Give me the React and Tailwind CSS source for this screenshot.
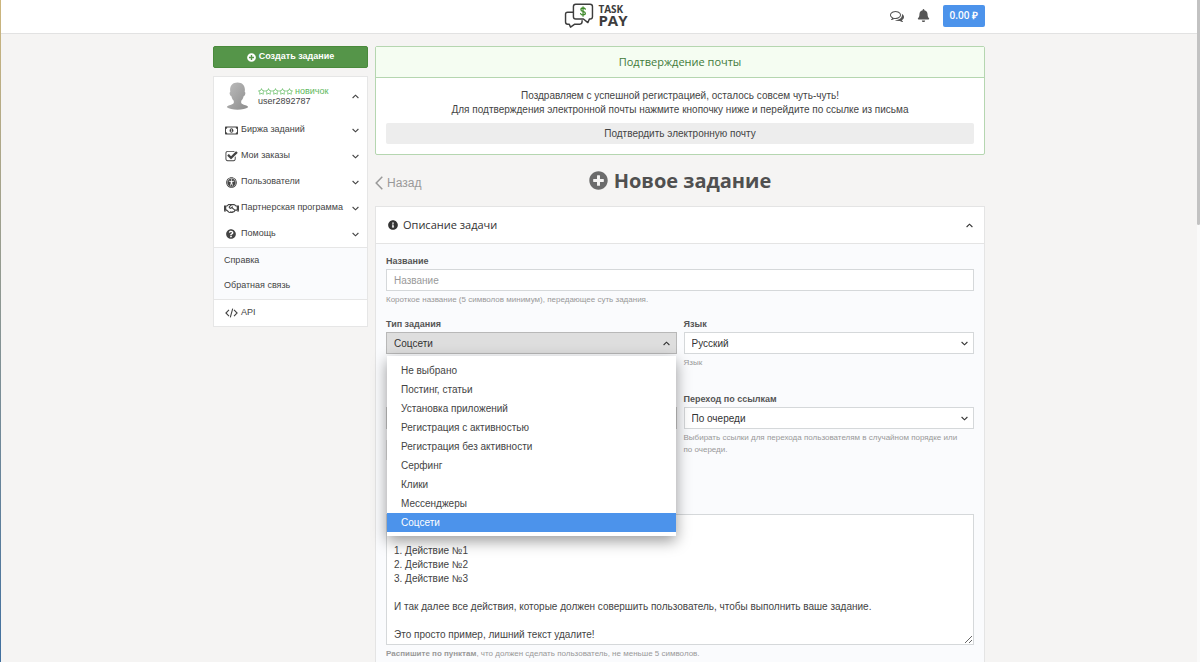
import { useState } from "react";
import {
  FaBell,
  FaInfoCircle,
  FaPlusCircle,
  FaQuestionCircle,
  FaRegHandshake,
  FaRegMoneyBillAlt,
  FaRegStar,
  FaUniversalAccess,
} from "react-icons/fa";

const TASK_TYPES = [
  "Не выбрано",
  "Постинг, статьи",
  "Установка приложений",
  "Регистрация с активностью",
  "Регистрация без активности",
  "Серфинг",
  "Клики",
  "Мессенджеры",
  "Соцсети",
];

const MENU = [
  { label: "Биржа заданий", icon: <FaRegMoneyBillAlt size={13} /> },
  { label: "Мои заказы", icon: <CheckSquareIcon /> },
  { label: "Пользователи", icon: <FaUniversalAccess size={11} /> },
  { label: "Партнерская программа", icon: <FaRegHandshake size={15} /> },
  { label: "Помощь", icon: <FaQuestionCircle size={10} /> },
];

const TASK_TEXT = `

1. Действие №1
2. Действие №2
3. Действие №3

И так далее все действия, которые должен совершить пользователь, чтобы выполнить ваше задание.

Это просто пример, лишний текст удалите!`;

function CheckSquareIcon() {
  return (
    <svg width="13" height="13" viewBox="0 0 1792 1792" fill="currentColor">
      <path d="M1472 930v318q0 119-84.5 203.5t-203.5 84.5h-832q-119 0-203.5-84.5t-84.5-203.5v-832q0-119 84.5-203.5t203.5-84.5h832q63 0 117 25 15 7 18 23 3 17-9 29l-49 49q-10 10-23 10-3 0-9-2-23-6-45-6h-832q-66 0-113 47t-47 113v832q0 66 47 113t113 47h832q66 0 113-47t47-113v-254q0-13 9-22l64-64q10-10 23-10 6 0 12 3 20 8 20 29zm231-489l-814 814q-24 24-57 24t-57-24l-430-430q-24-24-24-57t24-57l110-110q24-24 57-24t57 24l263 263 647-647q24-24 57-24t57 24l110 110q24 24 24 57t-24 57z" />
    </svg>
  );
}

function CommentsIcon() {
  return (
    <svg width="14" height="14" viewBox="0 0 1792 1792" fill="currentColor">
      <path d="M704 384q-153 0-286 52t-211.5 141-78.5 191q0 82 53 158t149 132l97 56-35 84q34-20 62-39l44-31 53 10q78 14 153 14 153 0 286-52t211.5-141 78.5-191-78.5-191-211.5-141-286-52zm0-128q191 0 353.5 68.5t256.5 186.5 94 257-94 257-256.5 186.5-353.5 68.5q-86 0-176-16-124 88-278 128-36 9-86 16h-3q-11 0-20.5-8t-11.5-21q-1-3-1-6.5t.5-6.5 2-6l2.5-5 3.5-5.5 4-5 4.5-5 4-4.5q5-6 23-25t26-29.5 22.5-29 25-38.5 20.5-44q-124-72-195-177t-71-224q0-139 94-257t256.5-186.5 353.5-68.5zm822 1169q10 24 20.5 44t25 38.5 22.5 29 26 29.5 23 25q1 1 4 4.5t4.5 5 4 5 3.5 5.5l2.5 5 2 6 .5 6.5-1 6.5q-3 14-13 22t-22 7q-50-7-86-16-154-40-278-128-90 16-176 16-271 0-472-132 58 4 88 4 161 0 309-45t264-129q125-92 192-212t67-254q0-77-23-152 129 71 204 178t75 230q0 120-71 224.5t-195 176.5z" />
    </svg>
  );
}

function CodeIcon() {
  return (
    <svg width="13" height="10" viewBox="0 0 13 10" fill="none" stroke="currentColor" strokeWidth="1.1">
      <path d="M4 1.800.9 5 4 8.200M9 1.800 12.100 5 9 8.200M7.700.7 5.300 9.300" />
    </svg>
  );
}

function Chevron({ up = false }) {
  return (
    <svg width="7" height="5" viewBox="0 0 7 5" fill="none" stroke="currentColor" strokeWidth="1.1">
      <path d={up ? "M0.6 4 3.5 1.2 6.4 4" : "M0.6 1 3.5 3.8 6.4 1"} />
    </svg>
  );
}

function Logo() {
  return (
    <a href="#home" aria-label="Task Pay" className="flex items-center gap-1 text-[#3d3d3d]">
      <svg width="30" height="25" viewBox="0 0 30 26" fill="none" stroke="currentColor" strokeWidth="1.5" strokeLinejoin="round" strokeLinecap="round">
        <path d="M8.6 9.6H3.2Q1 9.6 1 11.8v8Q1 22 3.2 22h1.6l1.4 3.1L10.6 22h5.2q2.4 0 2.4-2.4v-1.2" />
        <path d="M11.6 1.2h15q2.4 0 2.4 2.4v10.6q0 2.4-2.4 2.4h-.8L24.2 20.4l-4.6-3.8h-8q-2.4 0-2.4-2.4V3.600q0-2.400 2.400-2.400z" fill="#fff" />
        <path d="M21.6 6.4Q20.8 5.2 19.2 5.2q-2.200 0-2.200 1.700 0 1.400 2.200 1.800 2.400.5 2.400 2 0 1.700-2.400 1.700-1.800 0-2.500-1.300M19.200 3.900v9.800" stroke="#3f8a2b" strokeWidth="1.300" />
      </svg>
      <span className="flex flex-col font-['Open_Sans'] font-bold">
        <span className="text-[10px] leading-[9px]">TASK</span>
        <span className="text-[15px] leading-[13px]">PAY</span>
      </span>
    </a>
  );
}

function Avatar() {
  return (
    <svg width="23" height="28" viewBox="0 0 23 28">
      <defs>
        <linearGradient id="avatar" x1="0" y1="0" x2="1" y2="1">
          <stop offset="0" stopColor="#bdbdbd" />
          <stop offset="1" stopColor="#8c8c8c" />
        </linearGradient>
      </defs>
      <path
        fill="url(#avatar)"
        d="M11.500.5c4.600 0 7.400 2.800 7.400 7.300 0 .8-.1 1.500-.2 2.200.8.200.8 1.300.4 2.600-.4 1.100-.9 1.600-1.500 1.600-.5 2-1.300 3.500-2.400 4.600v1.900c0 1.300 3 1.900 5.200 2.900 1.100.5 1.700 1.100 1.700 1.700-2 1.500-6 2.400-10.600 2.400S2.900 26.800.9 25.300c0-.6.6-1.200 1.700-1.700 2.200-1 5.200-1.600 5.200-2.900v-1.900c-1.100-1.100-1.900-2.600-2.400-4.600-.6 0-1.100-.5-1.500-1.600-.4-1.300-.4-2.400.4-2.600-.1-.7-.2-1.400-.2-2.200C4.100 3.300 6.900.5 11.500.5z"
      />
    </svg>
  );
}

function Sidebar() {
  return (
    <aside className="w-[155px] shrink-0 text-[9px]">
      <button className="flex h-[22px] w-full items-center justify-center gap-[3px] rounded-xs border border-[#4a8a3c] bg-[#559549] font-bold text-white">
        <FaPlusCircle size={9} />
        Создать задание
      </button>

      <nav className="mt-2 border border-[#e6e6e6] bg-white">
        <button className="flex h-10 w-full items-center pr-2 pb-[2px] pl-3 text-left">
          <Avatar />
          <span className="ml-[9px] flex-1 leading-[10px]">
            <span className="flex items-center text-[#5cb85c]">
              <span className="mr-[2px] flex">
                {[1, 2, 3, 4, 5].map((n) => (
                  <FaRegStar key={n} size={7} />
                ))}
              </span>
              новичок
            </span>
            <span className="block">user2892787</span>
          </span>
          <Chevron up />
        </button>

        {MENU.map((item) => (
          <button key={item.label} className="flex h-[26px] w-full items-center pr-2 pl-[9px]">
            <span className="mr-[2px] flex w-4 justify-center">{item.icon}</span>
            <span className="flex-1 text-left whitespace-nowrap">{item.label}</span>
            <Chevron />
          </button>
        ))}

        <div className="border-y border-[#e6e6e6] bg-[#fafbfd]">
          <a href="#faq" className="flex h-[25px] items-center pl-[10px]">Справка</a>
          <a href="#feedback" className="flex h-[26px] items-center pl-[10px]">Обратная связь</a>
        </div>
        <a href="#api" className="flex h-[26px] items-center pl-[9px]">
          <span className="mr-[2px] flex w-4 justify-center">
            <CodeIcon />
          </span>
          API
        </a>
      </nav>
    </aside>
  );
}

function ConfirmMail() {
  return (
    <section className="rounded-xs border border-[#b5d6b0] bg-white">
      <h2 className="flex h-[31px] items-center justify-center border-b border-[#b5d6b0] bg-[#f5fdf2] font-['Open_Sans'] text-[11px] text-[#3f7a3a]">
        Подтверждение почты
      </h2>
      <div className="px-[10px] pt-[11px] pb-[10px] text-center">
        <p className="leading-[14px]">
          Поздравляем с успешной регистрацией, осталось совсем чуть-чуть!
          <br />
          Для подтверждения электронной почты нажмите кнопочку ниже и перейдите по ссылке из письма
        </p>
        <button className="mt-[6px] block h-[21px] w-full rounded-xs bg-[#ededed]">
          Подтвердить электронную почту
        </button>
      </div>
    </section>
  );
}

function SelectField({ id, label, value, hint }) {
  return (
    <div>
      <label htmlFor={id} className="block text-[9px] leading-[14px] font-bold text-[#555]">
        {label}
      </label>
      <div className="relative mt-px">
        <select id={id} className="block h-[22px] w-full appearance-none border border-[#d5d8da] bg-white px-[7px] text-[#333]">
          <option>{value}</option>
        </select>
        <span className="pointer-events-none absolute inset-y-0 right-[6px] flex items-center text-[#333]">
          <Chevron />
        </span>
      </div>
      <p className="mt-[3px] pr-[6px] text-[8px] leading-[12px] text-[#999]">{hint}</p>
    </div>
  );
}

function TaskTypeField() {
  const [value, setValue] = useState("Соцсети");
  const [open, setOpen] = useState(true);

  const choose = (type) => {
    setValue(type);
    setOpen(false);
  };

  return (
    <div>
      <label htmlFor="type" className="block text-[9px] leading-[14px] font-bold text-[#555]">
        Тип задания
      </label>
      <div className="relative mt-px">
        <select
          id="type"
          value={value}
          onChange={(e) => choose(e.target.value)}
          onMouseDown={(e) => {
            e.preventDefault();
            setOpen(!open);
          }}
          className="block h-[22px] w-full appearance-none border border-[#b8b8b8] bg-[#dedede] px-[7px] text-[#333]"
        >
          {TASK_TYPES.map((type) => (
            <option key={type}>{type}</option>
          ))}
        </select>
        <span className="pointer-events-none absolute inset-y-0 right-[7px] flex items-center text-[#333]">
          <Chevron up={open} />
        </span>
        {open && (
          <ul
            role="listbox"
            aria-label="Тип задания"
            className="absolute inset-x-px top-full z-10 mt-[2px] bg-white pt-[5px] pb-1 shadow-[0_5px_14px_rgba(0,0,0,0.4)]"
          >
            {TASK_TYPES.map((type) => (
              <li
                key={type}
                role="option"
                aria-selected={type === value}
                onClick={() => choose(type)}
                className="flex h-[19px] items-center px-[14px] aria-selected:bg-[#4c93eb] aria-selected:text-white"
              >
                {type}
              </li>
            ))}
          </ul>
        )}
      </div>
    </div>
  );
}

function TaskForm() {
  return (
    <section className="border border-[#e4e4e4] bg-[#fafbfd]">
      <h2 className="flex h-[37px] items-center border-b border-[#e4e4e4] bg-white pr-[11px] pl-3 font-['Open_Sans'] text-[11px] text-[#333]">
        <FaInfoCircle size={10} />
        <span className="ml-[5px] flex-1">Описание задачи</span>
        <Chevron up />
      </h2>

      <form className="px-[10px] pt-[10px] pb-5">
        <label htmlFor="name" className="block text-[9px] leading-[14px] font-bold text-[#555]">
          Название
        </label>
        <input
          id="name"
          placeholder="Название"
          className="mt-px block h-[22px] w-full border border-[#d5d8da] bg-white px-[7px] placeholder:text-[#999]"
        />
        <p className="mt-[3px] text-[8px] leading-[12px] text-[#999]">
          Короткое название (5 символов минимум), передающее суть задания.
        </p>

        <div className="mt-[11px] grid grid-cols-2 gap-x-[7px]">
          <TaskTypeField />
          <SelectField id="lang" label="Язык" value="Русский" hint="Язык" />
        </div>

        <div className="mt-[23px] grid grid-cols-2 gap-x-[7px]">
          <div className="flex flex-col items-start gap-[11px] pt-[15px]">
            <input aria-label="Ссылка" className="h-[22px] w-full border border-[#c8c8c8] bg-white px-[7px]" />
            <button type="button" aria-label="Добавить ссылку" className="h-5 w-20 bg-[#dedede]" />
          </div>
          <SelectField
            id="order"
            label="Переход по ссылкам"
            value="По очереди"
            hint="Выбирать ссылки для перехода пользователям в случайном порядке или по очереди."
          />
        </div>

        <textarea
          aria-label="Что нужно сделать"
          defaultValue={TASK_TEXT}
          className="mt-[54px] block h-[131px] w-full resize-y overflow-hidden border border-[#d5d8da] bg-white px-[7px] py-px leading-[14px]"
        />
        <p className="mt-[3px] text-[8px] leading-[12px] text-[#999]">
          <b>Распишите по пунктам</b>, что должен сделать пользователь, не меньше 5 символов.
        </p>
      </form>
    </section>
  );
}

export default function App() {
  return (
    <div className="relative h-screen overflow-hidden bg-[#f5f4f3] font-['Liberation_Sans',Arial,sans-serif] text-[10px] text-[#444]">
      <div className="h-full overflow-y-auto pr-[2px] [scrollbar-width:none]">
        <header className="border-b border-[#e2e2e2] bg-white">
          <div className="mx-auto grid h-[33px] max-w-[772px] grid-cols-3 items-center pb-[2px]">
            <div className="col-start-2 flex justify-center pr-[6px]">
              <Logo />
            </div>
            <div className="flex items-center justify-end text-[#555]">
              <button aria-label="Сообщения">
                <CommentsIcon />
              </button>
              <button aria-label="Уведомления" className="mx-[13px]">
                <FaBell size={13} />
              </button>
              <button className="h-[22px] rounded-xs bg-[#4c93eb] px-[7px] font-['Open_Sans'] font-semibold text-white">
                0.00 ₽
              </button>
            </div>
          </div>
        </header>

        <div className="mx-auto flex max-w-[772px] gap-[7px] pt-3">
          <Sidebar />
          <main className="min-w-0 flex-1">
            <ConfirmMail />
            <div className="grid h-[51px] grid-cols-[1fr_auto_1fr] items-center">
              <a href="#back" className="flex items-center gap-1 pt-1 text-[12px] text-[#999]">
                <svg width="8" height="14" viewBox="0 0 8 14" fill="none" stroke="currentColor" strokeWidth="1.5">
                  <path d="M7.300.8 1.200 7l6.100 6.200" />
                </svg>
                Назад
              </a>
              <h1 className="flex items-center gap-[6px] font-['Open_Sans'] text-[20px] font-bold text-[#505050]">
                <FaPlusCircle size={19} className="text-[#6b6b6b]" />
                Новое задание
              </h1>
            </div>
            <TaskForm />
          </main>
        </div>
      </div>

      {/* window edge and scroll indicator */}
      <div className="absolute inset-y-0 left-0 w-px bg-linear-to-b from-[#cdb67c] to-[#3f6f9f]" />
      <div className="absolute inset-y-0 right-0 w-[3px] bg-[#fafafa]">
        <div className="h-[34%] rounded-b-full bg-[#c2c2c2]" />
      </div>
    </div>
  );
}
